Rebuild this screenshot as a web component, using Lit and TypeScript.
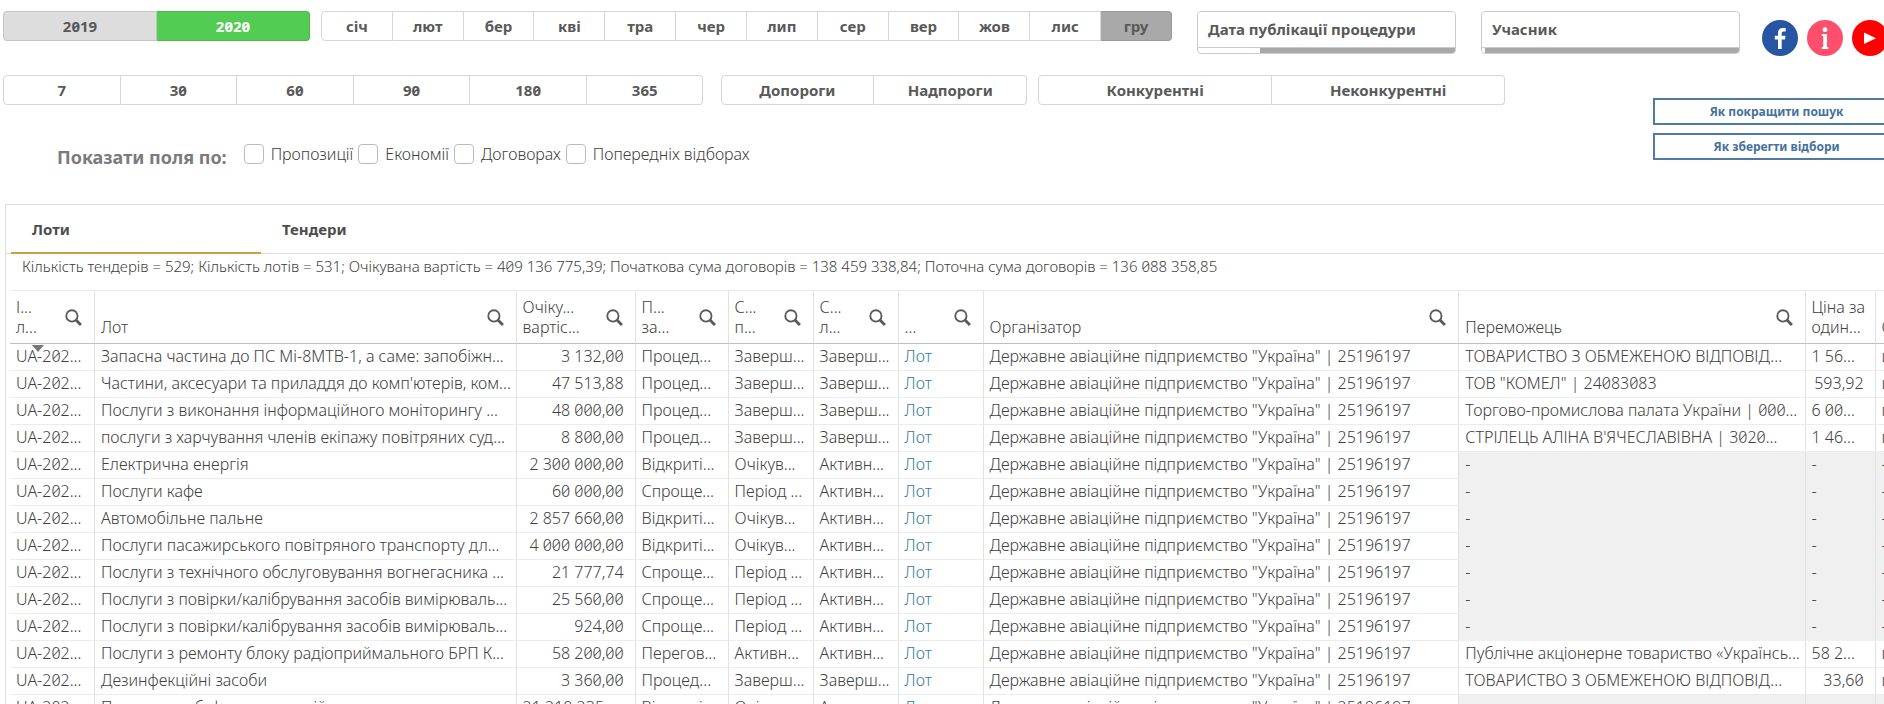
import { LitElement, html, css, nothing } from "lit";
import { customElement, state } from "lit/decorators.js";
import { classMap } from "lit/directives/class-map.js";

interface Column {
  key: string;
  title: string[];
  search: boolean;
}

const COLUMNS: Column[] = [
  { key: "id", title: ["І...", "л..."], search: true },
  { key: "lot", title: ["Лот"], search: true },
  { key: "sum", title: ["Очіку...", "вартіс..."], search: true },
  { key: "proc", title: ["П...", "за..."], search: true },
  { key: "stat", title: ["С...", "п..."], search: true },
  { key: "stat", title: ["С...", "л..."], search: true },
  { key: "stat", title: ["..."], search: true },
  { key: "org", title: ["Організатор"], search: true },
  { key: "win", title: ["Переможець"], search: true },
  { key: "price", title: ["Ціна за", "один..."], search: false },
  { key: "unit", title: ["О..."], search: false },
];

const ORG = 'Державне авіаційне підприємство "Україна" | 25196197';

// lot, expected value, procedure, procedure status, lot status, winner, unit price, unit
const ROWS: string[][] = [
  ["Запасна частина до ПС Мі-8МТВ-1, а саме: запобіжн...", "3 132,00", "Процед...", "Заверш...", "Заверш...", "ТОВАРИСТВО З ОБМЕЖЕНОЮ ВІДПОВІД...", "1 56...", "шт"],
  ["Частини, аксесуари та приладдя до комп'ютерів, ком...", "47 513,88", "Процед...", "Заверш...", "Заверш...", 'ТОВ "КОМЕЛ" | 24083083', "593,92", "шт"],
  ["Послуги з виконання інформаційного моніторингу ...", "48 000,00", "Процед...", "Заверш...", "Заверш...", "Торгово-промислова палата України | 000...", "6 00...", "п"],
  ["послуги з харчування членів екіпажу повітряних суд...", "8 800,00", "Процед...", "Заверш...", "Заверш...", "СТРІЛЕЦЬ АЛІНА В'ЯЧЕСЛАВІВНА | 3020...", "1 46...", "п"],
  ["Електрична енергія", "2 300 000,00", "Відкриті...", "Очікув...", "Активн..."],
  ["Послуги кафе", "60 000,00", "Спроще...", "Період ...", "Активн..."],
  ["Автомобільне пальне", "2 857 660,00", "Відкриті...", "Очікув...", "Активн..."],
  ["Послуги пасажирського повітряного транспорту дл...", "4 000 000,00", "Відкриті...", "Очікув...", "Активн..."],
  ["Послуги з технічного обслуговування вогнегасника ...", "21 777,74", "Спроще...", "Період ...", "Активн..."],
  ["Послуги з повірки/калібрування засобів вимірюваль...", "25 560,00", "Спроще...", "Період ...", "Активн..."],
  ["Послуги з повірки/калібрування засобів вимірюваль...", "924,00", "Спроще...", "Період ...", "Активн..."],
  ["Послуги з ремонту блоку радіоприймального БРП К...", "58 200,00", "Перегов...", "Активн...", "Активн...", "Публічне акціонерне товариство «Українсь...", "58 2...", "п"],
  ["Дезинфекційні засоби", "3 360,00", "Процед...", "Заверш...", "Заверш...", "ТОВАРИСТВО З ОБМЕЖЕНОЮ ВІДПОВІД...", "33,60", "ш"],
  ["Постачання буфетних позицій", "21 210 235...", "Відкриті...", "Очікув...", "Активн..."],
];

const MONTHS = ["січ", "лют", "бер", "кві", "тра", "чер", "лип", "сер", "вер", "жов", "лис", "гру"];

@customElement("segmented-bar")
class SegmentedBar extends LitElement {
  static properties = { items: { attribute: false }, tones: { attribute: false } };
  declare items: string[];
  declare tones: Record<string, string>;

  static styles = css`
    :host { display: flex; }
    .seg {
      flex: 1 1 0;
      min-width: 0;
      height: 30px;
      padding: 0;
      border: 1px solid #d6d6d6;
      border-left-width: 0;
      background: #fff;
      color: #595959;
      font: 700 15px/26px "Noto Sans", sans-serif;
      font-feature-settings: "zero";
    }
    .seg:first-child { border-left-width: 1px; border-radius: 4px 0 0 4px; }
    .seg:last-child { border-radius: 0 4px 4px 0; }
    .alt { background: #ddd; border-color: #c4c4c4; }
    .on { background: #52cc52; border-color: #4ab84a; color: #fff; }
    .off { background: #a9a9a9; border-color: #999; }
  `;

  render() {
    return (this.items ?? []).map(
      (t) => html`<button class="seg ${this.tones?.[t] ?? ""}" type="button">${t}</button>`
    );
  }
}

@customElement("app-root")
export class AppRoot extends LitElement {
  @state() private tab = 0;

  static styles = css`
    :host {
      display: block;
      height: 100vh;
      overflow: hidden;
      background: #fff;
      color: #404040;
      font: 300 16px/20px "Noto Sans", sans-serif;
      font-feature-settings: "zero";
    }
    button { font: inherit; font-feature-settings: inherit; color: inherit; cursor: pointer; }

    .top {
      display: grid;
      grid-template-columns: 307fr 851fr 273fr 273fr 133fr;
      column-gap: 11px;
      align-items: start;
      padding: 11px 0 0 3px;
    }
    .filter {
      display: flex;
      flex-direction: column;
      height: 43px;
      margin-left: 14px;
      padding: 0;
      border: 1px solid #ccc;
      border-radius: 4px;
      background: #fff;
      text-align: left;
      overflow: hidden;
    }
    .filter-name {
      flex: 1;
      align-self: stretch;
      padding: 0 10px;
      border-bottom: 1px solid #ccc;
      color: #595959;
      font: 700 15px/35px "Noto Sans", sans-serif;
      white-space: nowrap;
    }
    .track { align-self: stretch; height: 7px; display: flex; justify-content: flex-end; }
    .fill { height: 5px; background: #a9a9a9; }
    .social { display: flex; gap: 9px; margin: 9px -6px 0 11px; }
    .social a { flex: none; height: 36px; }

    .middle { display: grid; grid-template-columns: 1499fr 378fr; padding: 19px 0 0 3px; }
    .ranges { display: grid; grid-template-columns: 699fr 312fr 466fr; column-gap: 11px; }
    .ranges .mid { margin-left: 6px; }
    .fields { display: flex; align-items: center; padding: 34px 0 0 54px; white-space: nowrap; }
    .fields-title { margin: 6px 17px 0 0; color: #7b7b7b; font-weight: 700; font-size: 18px; line-height: 24px; }
    .check { display: flex; align-items: center; gap: 7px; margin-right: 5px; }
    .check input {
      appearance: none;
      width: 20px;
      height: 20px;
      margin: 0;
      border: 1px solid #bbb;
      border-radius: 4px;
      background: #fff;
    }
    .help { display: grid; gap: 8px; margin: 23px -16px 0 148px; align-content: start; }
    .help a {
      display: block;
      border: 2px solid #4f7aa3;
      color: #44719d;
      font-weight: 700;
      font-size: 12px;
      line-height: 23px;
      text-align: center;
      text-decoration: none;
    }

    .panel { margin: 35px 0 0 5px; border: solid #ddd; border-width: 1px 0 0 1px; }
    .tabs { display: flex; padding-left: 5px; border-bottom: 1px solid #ddd; }
    .tab {
      width: 250px;
      height: 49px;
      margin-bottom: -1px;
      padding: 0 21px;
      border: 0;
      border-bottom: 2px solid transparent;
      background: none;
      color: #4d4d4d;
      text-align: left;
      font-weight: 700;
      font-size: 15px;
    }
    .tab.current { border-bottom-color: #c8a045; }
    .summary { margin: 0; padding: 1px 16px 0; font-size: 15px; line-height: 22px; white-space: nowrap; }
    .scroller { margin: 13px 0 0 4px; overflow: hidden; }

    table { width: calc(100% + 60px); border-collapse: separate; border-spacing: 0; table-layout: fixed; }
    .id, .stat { width: 85px; }
    .sum { width: 119px; }
    .proc { width: 93px; }
    .price { width: 70px; }
    .lot { width: 21.8%; }
    .org { width: 24.6%; }
    .win { width: 17.9%; }
    th, td { box-sizing: border-box; border-right: 1px solid #e2e2e2; text-align: left; font-weight: 300; white-space: nowrap; overflow: hidden; }
    th { height: 54px; padding: 0; border-top: 1px solid #eaeaea; border-bottom: 1px solid #bfbfbf; }
    .head { display: flex; align-items: center; height: 52px; padding: 0 12px 0 6px; }
    .titles { flex: 1; align-self: flex-end; padding-bottom: 6px; }
    .titles span { display: block; }
    .find { flex: none; width: 17px; height: 17px; padding: 0; border: 0; background: none; display: flex; }
    td { height: 27px; padding: 0 0 2px 6px; border-bottom: 1px solid #ececec; line-height: 24px; }
    td.num { text-align: right; padding-right: 11px; }
    td.empty { background: #f0f0f0; border-bottom-color: #f0f0f0; }
    td.first { position: relative; }
    .sort { position: absolute; top: 1px; left: 22px; width: 12px; height: 7px; }
    td a { color: #2f7d9e; text-decoration: none; }
  `;

  private price(value: string) {
    const cut = value.endsWith("...");
    return html`<td class=${cut ? "" : "num"}>${value}</td>`;
  }

  private row(r: string[], index: number) {
    const [lot, sum, proc, s1, s2, win, price, unit] = r;
    return html`<tr>
      <td class="first">
        UA-202...${index === 0
          ? html`<svg class="sort" viewBox="0 0 12 7" aria-hidden="true"><path d="M0 0h12L6 7z" fill="#777" /></svg>`
          : nothing}
      </td>
      <td>${lot}</td>
      <td class=${sum.endsWith("...") ? "" : "num"}>${sum}</td>
      <td>${proc}</td>
      <td>${s1}</td>
      <td>${s2}</td>
      <td><a href="#lot">Лот</a></td>
      <td>${ORG}</td>
      ${win
        ? html`<td>${win}</td>${this.price(price)}<td>${unit}</td>`
        : html`<td class="empty">-</td><td class="empty">-</td><td class="empty">-</td>`}
    </tr>`;
  }

  render() {
    return html`
      <header class="top">
        <segmented-bar .items=${["2019", "2020"]} .tones=${{ "2019": "alt", "2020": "on" }}></segmented-bar>
        <segmented-bar .items=${MONTHS} .tones=${{ гру: "off" }}></segmented-bar>
        ${[["Дата публікації процедури", 76], ["Учасник", 99]].map(
          ([name, share]) => html`<button class="filter" type="button">
            <span class="filter-name">${name}</span>
            <span class="track"><span class="fill" style="width:${share}%"></span></span>
          </button>`
        )}
        <nav class="social">
          <a href="#facebook" aria-label="Facebook">
            <svg width="36" height="36" viewBox="0 0 36 36">
              <circle cx="18" cy="18" r="18" fill="#2656a3" />
              <path d="M16 29V19.500H12.800V15.800H16V13C16 9.700 17.900 8 20.900 8C22.300 8 23.200 8.100 23.700 8.200V11.500H21.700C20.200 11.500 19.700 12.300 19.700 13.500V15.800H23.500L23 19.500H19.700V29Z" fill="#fff" />
            </svg>
          </a>
          <a href="#info" aria-label="Info">
            <svg width="36" height="36" viewBox="0 0 36 36">
              <circle cx="18" cy="18" r="18" fill="#ff4f6c" />
              <circle cx="18" cy="9.700" r="2.400" fill="#fff" />
              <path d="M14.800 14H20V27H21.300V29H14.800V27H16.200V16H14.800Z" fill="#fff" />
            </svg>
          </a>
          <a href="#youtube" aria-label="YouTube">
            <svg width="36" height="36" viewBox="0 0 36 36">
              <circle cx="18" cy="18" r="18" fill="#f00" />
              <path d="M12 12.500V24L24 18.200Z" fill="#fff" />
            </svg>
          </a>
        </nav>
      </header>

      <div class="middle">
        <div>
          <div class="ranges">
            <segmented-bar .items=${["7", "30", "60", "90", "180", "365"]}></segmented-bar>
            <segmented-bar class="mid" .items=${["Допороги", "Надпороги"]}></segmented-bar>
            <segmented-bar .items=${["Конкурентні", "Неконкурентні"]}></segmented-bar>
          </div>
          <div class="fields">
            <span class="fields-title">Показати поля по:</span>
            ${["Пропозиції", "Економії", "Договорах", "Попередніх відборах"].map(
              (t) => html`<label class="check"><input type="checkbox" />${t}</label>`
            )}
          </div>
        </div>
        <nav class="help">
          <a href="#search-help">Як покращити пошук</a>
          <a href="#save-help">Як зберегти відбори</a>
        </nav>
      </div>

      <section class="panel">
        <div class="tabs" role="tablist">
          ${["Лоти", "Тендери"].map(
            (t, i) => html`<button
              type="button"
              role="tab"
              aria-selected=${this.tab === i}
              class=${classMap({ tab: true, current: this.tab === i })}
              @click=${() => (this.tab = i)}
            >${t}</button>`
          )}
        </div>
        <p class="summary">Кількість тендерів = 529; Кількість лотів = 531; Очікувана вартість = 409 136 775,39; Початкова сума договорів = 138 459 338,84; Поточна сума договорів = 136 088 358,85</p>
        <div class="scroller">
          <table>
            <thead>
              <tr>
                ${COLUMNS.map(
                  (c) => html`<th class=${c.key} scope="col">
                    <div class="head">
                      <div class="titles">${c.title.map((t) => html`<span>${t}</span>`)}</div>
                      ${c.search
                        ? html`<button class="find" type="button" aria-label="Пошук">
                            <svg width="17" height="17" viewBox="0 0 16 16">
                              <circle cx="6.500" cy="6.500" r="5.300" fill="none" stroke="#595959" stroke-width="1.700" />
                              <path d="M10.300 10.300l4.700 4.700" stroke="#595959" stroke-width="2.600" />
                            </svg>
                          </button>`
                        : nothing}
                    </div>
                  </th>`
                )}
              </tr>
            </thead>
            <tbody>${ROWS.map((r, i) => this.row(r, i))}</tbody>
          </table>
        </div>
      </section>
    `;
  }
}
